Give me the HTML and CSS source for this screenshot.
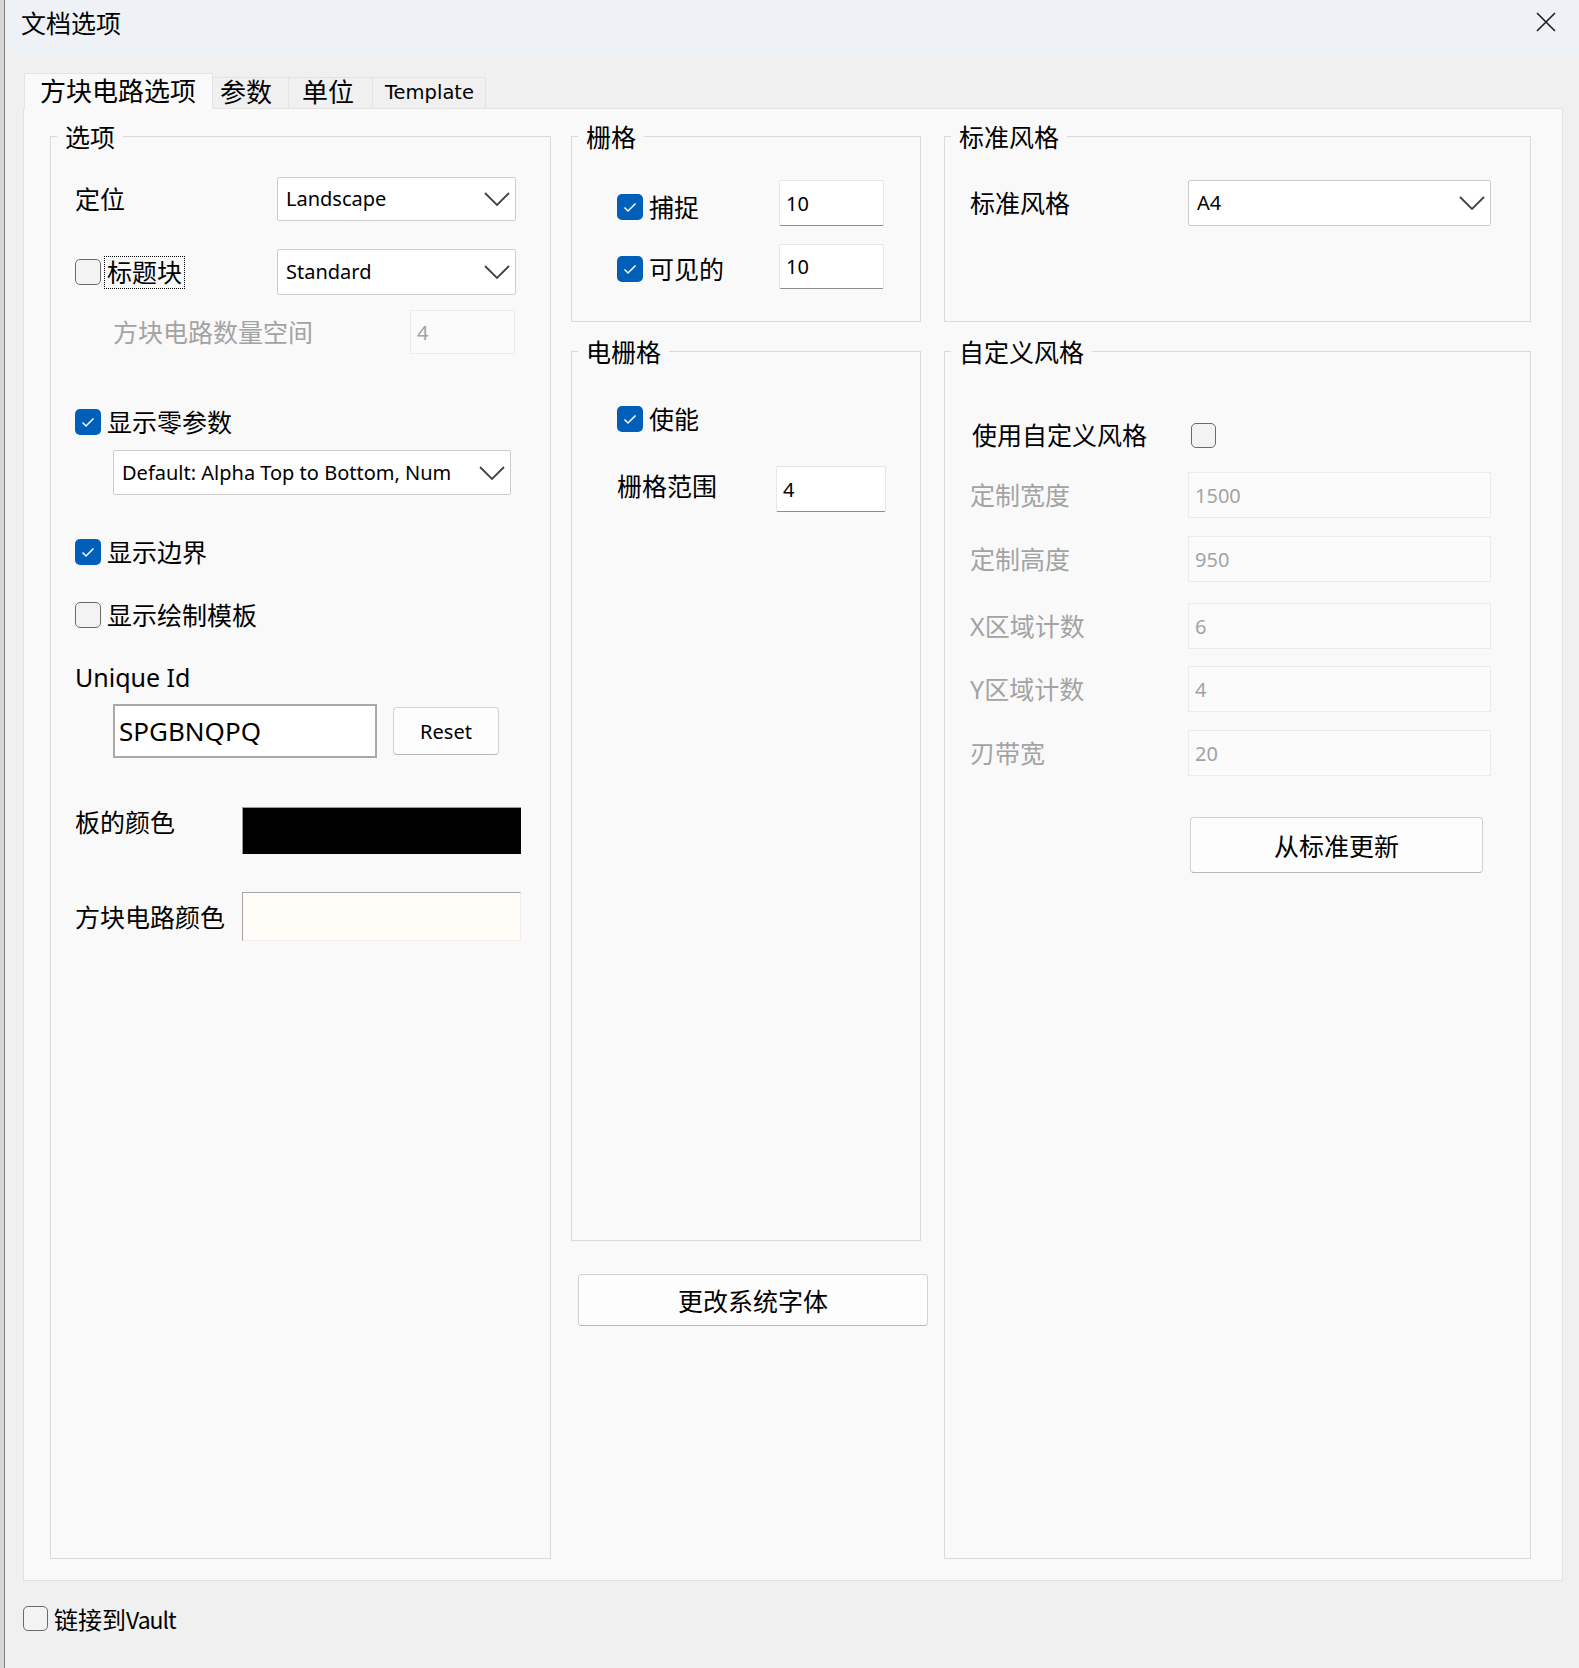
FILE: index.html
```html
<!DOCTYPE html>
<html lang="zh-CN">
<head>
<meta charset="utf-8">
<title>文档选项</title>
<link rel="stylesheet" href="styles.css">
</head>
<body>
<div class="screen">
  <div class="edge"></div>
  <div class="dialog">
    <div class="titlebar">
      <span class="title">文档选项</span>
      <svg class="close" width="20" height="20" viewBox="0 0 20 20"><path d="M1 1 L19 19 M19 1 L1 19" stroke="#1b1b1b" stroke-width="1.6" fill="none"/></svg>
    </div>

    <div class="tabs">
      <div class="tab active">方块电路选项</div>
      <div class="tab t-params">参数</div>
      <div class="tab t-units">单位</div>
      <div class="tab t-template">Template</div>
    </div>

    <div class="panel">
      <!-- Column 1 -->
      <div class="col col1">
        <fieldset class="group grow">
          <legend>选项</legend>
          <div class="gbody b1">
            <div class="row r-orient">
              <span class="lbl w202">定位</span>
              <div class="select w239"><span class="sel-text">Landscape</span><svg class="chev" width="26" height="14" viewBox="0 0 26 14"><path d="M1 1 L13 13 L25 1" stroke="#444" stroke-width="1.8" fill="none"/></svg></div>
            </div>
            <div class="row r-title">
              <div class="cbwrap w202">
                <span class="cb"></span>
                <span class="lbl focus">标题块</span>
              </div>
              <div class="select w239 h46"><span class="sel-text">Standard</span><svg class="chev" width="26" height="14" viewBox="0 0 26 14"><path d="M1 1 L13 13 L25 1" stroke="#444" stroke-width="1.8" fill="none"/></svg></div>
            </div>
            <div class="row r-space">
              <span class="lbl dis w335 indent">方块电路数量空间</span>
              <div class="field disabled w105">4</div>
            </div>
            <div class="row cbrow r-zero">
              <span class="cb on"><svg width="26" height="26" viewBox="0 0 26 26"><path d="M7.5 13.5 L11 17 L18.5 9.5" stroke="#fff" stroke-width="1.5" fill="none"/></svg></span>
              <span class="lbl">显示零参数</span>
            </div>
            <div class="row r-default">
              <div class="select w398 h45"><span class="sel-text">Default: Alpha Top to Bottom, Num</span><svg class="chev" width="26" height="14" viewBox="0 0 26 14"><path d="M1 1 L13 13 L25 1" stroke="#444" stroke-width="1.8" fill="none"/></svg></div>
            </div>
            <div class="row cbrow r-border">
              <span class="cb on"><svg width="26" height="26" viewBox="0 0 26 26"><path d="M7.5 13.5 L11 17 L18.5 9.5" stroke="#fff" stroke-width="1.5" fill="none"/></svg></span>
              <span class="lbl">显示边界</span>
            </div>
            <div class="row cbrow r-template">
              <span class="cb"></span>
              <span class="lbl">显示绘制模板</span>
            </div>
            <div class="row r-uid">
              <span class="lbl latin">Unique Id</span>
            </div>
            <div class="row r-uidval">
              <div class="uid">SPGBNQPQ</div>
              <div class="btn reset">Reset</div>
            </div>
            <div class="row r-board">
              <span class="lbl w167 top">板的颜色</span>
              <div class="swatch black"></div>
            </div>
            <div class="row r-sheet">
              <span class="lbl w167">方块电路颜色</span>
              <div class="swatch cream"></div>
            </div>
          </div>
        </fieldset>
      </div>

      <!-- Column 2 -->
      <div class="col col2">
        <fieldset class="group short">
          <legend>栅格</legend>
          <div class="gbody b2">
            <div class="row r-snap">
              <div class="cbwrap w162 low">
                <span class="cb on"><svg width="26" height="26" viewBox="0 0 26 26"><path d="M7.5 13.5 L11 17 L18.5 9.5" stroke="#fff" stroke-width="1.5" fill="none"/></svg></span>
                <span class="lbl">捕捉</span>
              </div>
              <div class="field edit w105 h46">10</div>
            </div>
            <div class="row r-visible">
              <div class="cbwrap w162 low2">
                <span class="cb on"><svg width="26" height="26" viewBox="0 0 26 26"><path d="M7.5 13.5 L11 17 L18.5 9.5" stroke="#fff" stroke-width="1.5" fill="none"/></svg></span>
                <span class="lbl">可见的</span>
              </div>
              <div class="field edit w105 h45">10</div>
            </div>
          </div>
        </fieldset>
        <fieldset class="group egrid">
          <legend>电栅格</legend>
          <div class="gbody b2">
            <div class="row cbrow r-enable">
              <span class="cb on"><svg width="26" height="26" viewBox="0 0 26 26"><path d="M7.5 13.5 L11 17 L18.5 9.5" stroke="#fff" stroke-width="1.5" fill="none"/></svg></span>
              <span class="lbl">使能</span>
            </div>
            <div class="row r-range">
              <span class="lbl w159 up">栅格范围</span>
              <div class="field edit w110 h46">4</div>
            </div>
          </div>
        </fieldset>
        <div class="btn font-btn">更改系统字体</div>
      </div>

      <!-- Column 3 -->
      <div class="col col3">
        <fieldset class="group short">
          <legend>标准风格</legend>
          <div class="gbody b3">
            <div class="row r-std">
              <span class="lbl w218">标准风格</span>
              <div class="select w303 h46"><span class="sel-text">A4</span><svg class="chev" width="26" height="14" viewBox="0 0 26 14"><path d="M1 1 L13 13 L25 1" stroke="#444" stroke-width="1.8" fill="none"/></svg></div>
            </div>
          </div>
        </fieldset>
        <fieldset class="group grow custom">
          <legend>自定义风格</legend>
          <div class="gbody b3">
            <div class="row r-usecustom">
              <span class="lbl w221 nudge">使用自定义风格</span>
              <span class="cb small"></span>
            </div>
            <div class="row r-c1">
              <span class="lbl dis w218">定制宽度</span>
              <div class="field disabled w303 h46">1500</div>
            </div>
            <div class="row r-c2">
              <span class="lbl dis w218">定制高度</span>
              <div class="field disabled w303 h46">950</div>
            </div>
            <div class="row r-c3">
              <span class="lbl dis w218">X区域计数</span>
              <div class="field disabled w303 h46">6</div>
            </div>
            <div class="row r-c4">
              <span class="lbl dis w218">Y区域计数</span>
              <div class="field disabled w303 h46">4</div>
            </div>
            <div class="row r-c5">
              <span class="lbl dis w218">刃带宽</span>
              <div class="field disabled w303 h46">20</div>
            </div>
            <div class="btn update-btn">从标准更新</div>
          </div>
        </fieldset>
      </div>
    </div>

    <div class="footer">
      <span class="cb small"></span>
      <span class="lbl vault">链接到<span class="vault-latin">Vault</span></span>
    </div>
  </div>
</div>
</body>
</html>
```

FILE: styles.css
```css
html, body {
  margin: 0;
  padding: 0;
}
body {
  width: 1579px;
  height: 1668px;
  overflow: hidden;
  background: #f0f0f0;
  font-family: "Noto Sans", "Noto Sans CJK SC", sans-serif;
  color: #000;
}
.screen {
  display: flex;
  height: 1668px;
}
.edge {
  width: 5px;
  flex: none;
  background: #d6d6d6;
  border-right: 1px solid #808080;
  box-sizing: border-box;
}
.dialog {
  flex: 1;
  display: flex;
  flex-direction: column;
  background: #f0f0f0;
  border-top-right-radius: 6px;
  overflow: hidden;
}

/* Title bar */
.titlebar {
  height: 53px;
  flex: none;
  background: #eef2f7;
  display: flex;
  align-items: flex-start;
  justify-content: space-between;
  padding: 7px 23px 0 16px;
  box-sizing: border-box;
}
.title {
  font-size: 25px;
  line-height: 30px;
  font-family: "Noto Sans CJK SC", sans-serif;
}
.close {
  margin-top: 5px;
}

/* Tabs */
.tabs {
  display: flex;
  align-items: flex-end;
  height: 35px;
  margin: 20px 0 0 19px;
  flex: none;
}
.tab {
  box-sizing: border-box;
  height: 31px;
  border: 1px solid #e3e3e3;
  border-bottom: none;
  background: #f0f0f0;
  font-size: 26px;
  line-height: 26px;
  text-align: left;
  margin-left: -1px;
  white-space: nowrap;
  font-family: "Noto Sans CJK SC", sans-serif;
}
.tab.active {
  height: 36px;
  width: 189px;
  margin-left: 0;
  margin-bottom: -1px;
  background: #f9f9f9;
  position: relative;
  z-index: 1;
  line-height: 31px;
  padding-left: 15px;
}
.t-params { width: 77px; padding-left: 7px; }
.t-units { width: 85px; padding-left: 13px; }
.t-template {
  width: 114px;
  padding-left: 12px;
  font-family: "DejaVu Sans", sans-serif;
  font-size: 19.5px;
  line-height: 30px;
}

/* Panel */
.panel {
  box-sizing: border-box;
  width: 1540px;
  height: 1473px;
  margin-left: 18px;
  border: 1px solid #e2e2e2;
  background: #f9f9f9;
  display: flex;
  align-items: stretch;
  padding: 12px 0 21px 26px;
  flex: none;
}
.col {
  display: flex;
  flex-direction: column;
  flex: none;
}
.col1 { width: 501px; }
.col2 { width: 350px; margin-left: 20px; }
.col3 { width: 587px; margin-left: 23px; }

.group {
  margin: 0;
  padding: 0;
  border: 1px solid #dadada;
  min-width: 0;
  box-sizing: border-box;
}
.group legend {
  font-size: 25px;
  line-height: 30px;
  padding: 0 8px;
  margin-left: 6px;
  font-family: "Noto Sans CJK SC", sans-serif;
}
.group.grow { flex: 1; }
.group.short { height: 201px; flex: none; }
.group.egrid { height: 905px; flex: none; margin-top: 14px; }
.group.custom { margin-top: 14px; }

.gbody {
  display: flex;
  flex-direction: column;
}
.b1 { padding-left: 24px; }
.b2 { padding-left: 45px; }
.b3 { padding-left: 25px; }

.row {
  display: flex;
  align-items: center;
  flex: none;
}
.cbrow { height: 30px; }
.cbwrap {
  display: flex;
  align-items: center;
  flex: none;
}
.cbwrap.low { margin-top: 8px; }
.cbwrap.low2 { margin-top: 4px; }

.lbl {
  font-size: 25px;
  line-height: 30px;
  white-space: nowrap;
  flex: none;
}
.lbl.latin {
  font-family: "Noto Sans", sans-serif;
}
.lbl.dis { color: #a3a3a3; }
.lbl.indent { padding-left: 38px; box-sizing: border-box; }
.lbl.focus {
  outline: 1px dotted #000;
  padding: 0 2px;
  margin-left: 4px;
  line-height: 31px;
}
.lbl.top { align-self: flex-start; }
.lbl.up { margin-top: -6px; }
.lbl.nudge { padding-left: 2px; box-sizing: border-box; }

/* Checkboxes */
.cb {
  width: 26px;
  height: 26px;
  box-sizing: border-box;
  border: 1.5px solid #6a6a6a;
  border-radius: 5px;
  background: #f3f3f3;
  flex: none;
  display: block;
}
.cb.small {
  width: 25px;
  height: 25px;
}
.cb.on {
  border: none;
  background: #005fb8;
}
.cb.on svg { display: block; }
.cbrow .cb + .lbl { margin-left: 6px; }
.cbwrap .cb.on + .lbl { margin-left: 6px; }

/* Selects */
.select {
  box-sizing: border-box;
  height: 44px;
  background: #fff;
  border: 1px solid #cdcdcd;
  border-radius: 2px;
  display: flex;
  align-items: center;
  padding: 0 5px 0 8px;
  flex: none;
}
.sel-text {
  flex: 1;
  overflow: hidden;
  white-space: nowrap;
  font-size: 20px;
  line-height: 28px;
}
.chev {
  flex: none;
  margin-left: 12px;
}

/* Text fields */
.field {
  box-sizing: border-box;
  height: 44px;
  padding-left: 6px;
  font-size: 20px;
  display: flex;
  align-items: center;
  flex: none;
}
.field.edit {
  background: #fff;
  border: 1px solid #e6e6e6;
  border-bottom: 1px solid #8c8c8c;
  border-radius: 2px;
}
.field.disabled {
  background: #fbfbfb;
  border: 1px solid #ebebeb;
  color: #a3a3a3;
}

.uid {
  box-sizing: border-box;
  width: 264px;
  height: 54px;
  margin-left: 38px;
  border: 2px solid #a9a9a9;
  background: #fff;
  font-size: 26px;
  padding-left: 4px;
  display: flex;
  align-items: center;
}

/* Buttons */
.btn {
  box-sizing: border-box;
  background: #fdfdfd;
  border: 1px solid #d2d2d2;
  border-bottom-color: #b8b8b8;
  border-radius: 4px;
  display: flex;
  align-items: center;
  justify-content: center;
  flex: none;
}
.reset {
  width: 106px;
  height: 48px;
  margin-left: 16px;
  font-size: 20px;
}
.font-btn {
  width: 350px;
  height: 52px;
  margin-top: 33px;
  margin-left: 7px;
  font-size: 25px;
  font-family: "Noto Sans CJK SC", sans-serif;
}
.update-btn {
  width: 293px;
  height: 56px;
  margin-top: 41px;
  margin-left: 220px;
  font-size: 25px;
  font-family: "Noto Sans CJK SC", sans-serif;
}

/* Swatches */
.swatch {
  box-sizing: border-box;
  width: 279px;
  flex: none;
}
.swatch.black {
  height: 47px;
  background: #000;
  border-top: 1px solid #9a9a9a;
  border-left: 1px solid #9a9a9a;
}
.swatch.cream {
  height: 49px;
  background: #fffcf7;
  border-top: 1px solid #a5a5a5;
  border-left: 1px solid #a5a5a5;
  border-right: 1px solid #efefef;
  border-bottom: 1px solid #efefef;
}

/* Size utilities (after component rules so they win) */
.w105 { width: 105px; }
.w110 { width: 110px; }
.w159 { width: 159px; }
.w162 { width: 162px; }
.w167 { width: 167px; }
.w202 { width: 202px; }
.w218 { width: 218px; }
.w221 { width: 221px; }
.w239 { width: 239px; }
.w303 { width: 303px; }
.w335 { width: 335px; }
.w398 { width: 398px; }
.h45 { height: 45px; }
.h46 { height: 46px; }

/* Row vertical placement */
.r-orient { margin-top: 26px; height: 44px; }
.r-title { margin-top: 28px; height: 46px; }
.r-space { margin-top: 15px; height: 44px; }
.r-zero { margin-top: 53px; }
.r-default { margin-top: 13px; height: 45px; padding-left: 38px; }
.r-border { margin-top: 42px; }
.r-template { margin-top: 33px; }
.r-uid { margin-top: 32px; height: 30px; }
.r-uidval { margin-top: 12px; height: 54px; }
.r-board { margin-top: 49px; height: 47px; }
.r-sheet { margin-top: 38px; height: 49px; }

.r-snap { margin-top: 29px; height: 46px; }
.r-visible { margin-top: 18px; height: 45px; }
.r-enable { margin-top: 38px; }
.r-range { margin-top: 32px; height: 46px; }

.r-std { margin-top: 29px; height: 46px; }
.r-usecustom { margin-top: 54px; height: 30px; }
.r-c1 { margin-top: 22px; }
.r-c2 { margin-top: 18px; }
.r-c3 { margin-top: 21px; }
.r-c4 { margin-top: 17px; }
.r-c5 { margin-top: 18px; }

/* Footer */
.footer {
  display: flex;
  align-items: center;
  height: 27px;
  margin: 24px 0 0 18px;
}
.footer .cb { margin-right: 6px; }
.lbl.vault {
  font-family: "Noto Sans CJK SC", sans-serif;
  font-size: 24px;
}
.vault-latin {
  font-size: 23px;
  letter-spacing: -1px;
}
```
